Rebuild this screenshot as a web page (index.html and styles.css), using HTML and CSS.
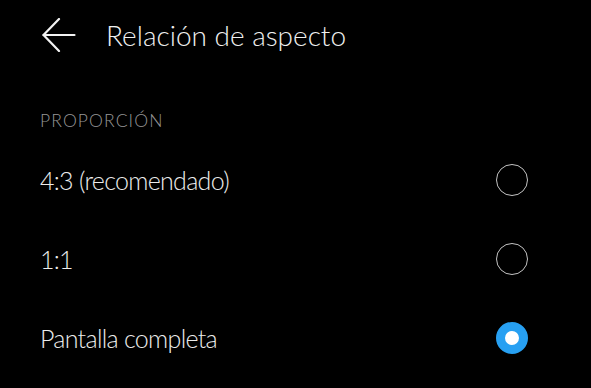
FILE: index.html
```html
<!DOCTYPE html>
<html lang="es">
<head>
<meta charset="utf-8">
<link rel="stylesheet" href="styles.css">
</head>
<body>
<div class="screen">
  <header class="topbar">
    <svg class="back" width="34" height="34" viewBox="0 0 34 34" fill="none" stroke="#f2f2f2" stroke-width="2.2" stroke-linecap="round" stroke-linejoin="round">
      <path d="M1.5 17 H32.5"/>
      <path d="M17 1 L1.5 17 L17 33"/>
    </svg>
    <h1 class="title">Relación de aspecto</h1>
  </header>
  <div class="section-label">PROPORCIÓN</div>
  <ul class="options">
    <li class="option">
      <span class="option-text">4:3 (recomendado)</span>
      <span class="radio"></span>
    </li>
    <li class="option">
      <span class="option-text">1:1</span>
      <span class="radio"></span>
    </li>
    <li class="option">
      <span class="option-text">Pantalla completa</span>
      <span class="radio radio-on"></span>
    </li>
  </ul>
</div>
</body>
</html>
```

FILE: styles.css
```css
html, body {
  margin: 0;
  padding: 0;
  background: #000;
}

.screen {
  width: 591px;
  height: 388px;
  background: #000;
  color: #ececec;
  font-family: Lato, "Noto Sans", sans-serif;
  font-weight: 300;
  overflow: hidden;
}

.topbar {
  display: flex;
  align-items: center;
  height: 70px;
  padding-left: 42px;
}

.back {
  display: block;
  flex: none;
}

.title {
  margin: 0 0 0 30px;
  font-size: 28px;
  font-weight: 300;
  color: #f0f0f0;
}

.section-label {
  padding: 41px 0 0 40px;
  height: 29px;
  line-height: 20px;
  font-size: 17.5px;
  color: #969696;
  letter-spacing: 1.1px;
}

.options {
  list-style: none;
  margin: 0;
  padding: 0;
}

.option {
  display: flex;
  align-items: center;
  justify-content: space-between;
  height: 79px;
  padding: 0 63px 0 40px;
}

.option-text {
  font-size: 25px;
  letter-spacing: -0.7px;
  color: #ececec;
}

.radio {
  box-sizing: border-box;
  width: 32px;
  height: 32px;
  border-radius: 50%;
  border: 1.6px solid #c4c4c4;
  flex: none;
}

.radio-on {
  border: 9px solid #27a0f2;
  background: #fff;
}
```
